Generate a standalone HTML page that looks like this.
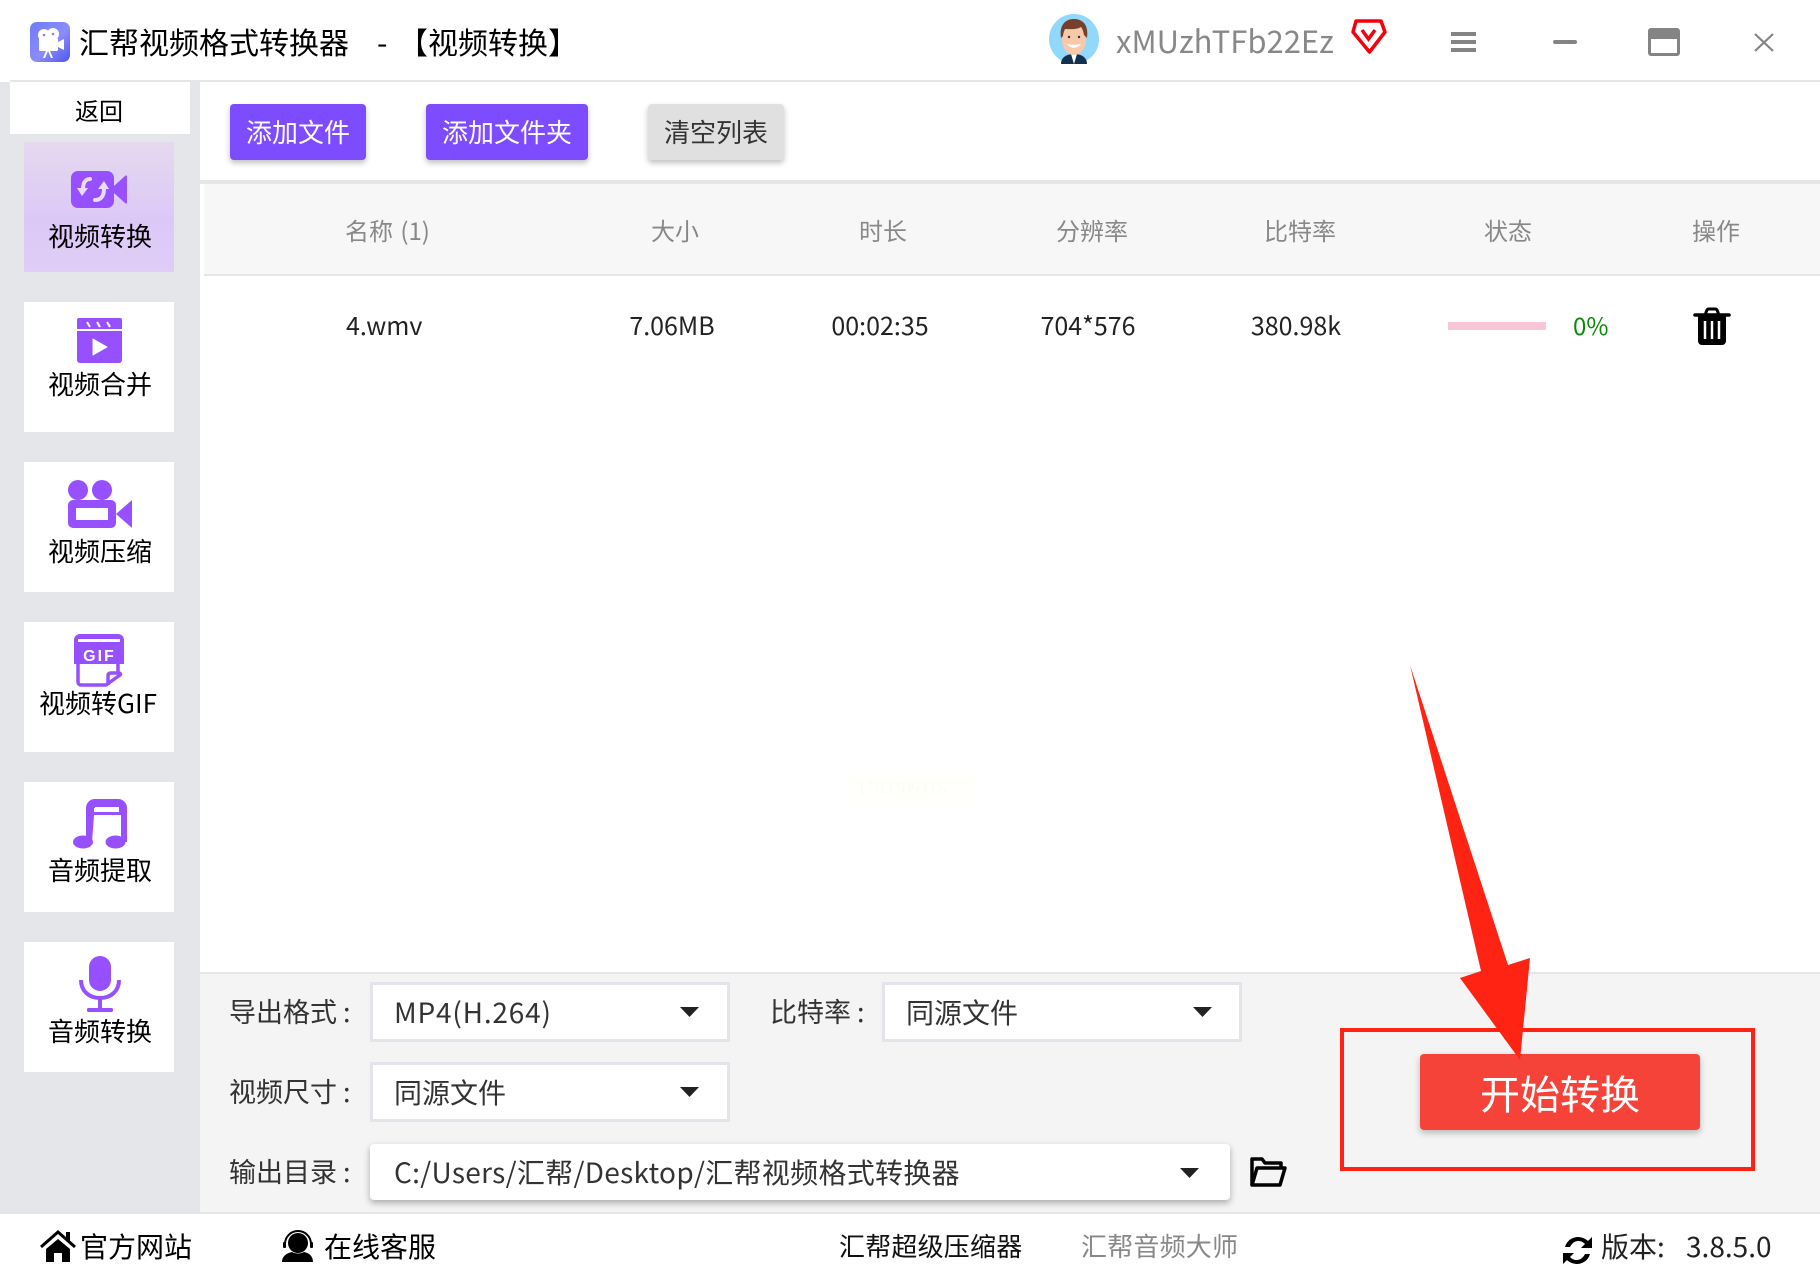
<!DOCTYPE html>
<html><head><meta charset="utf-8">
<style>
html,body{margin:0;padding:0;width:1820px;height:1280px;overflow:hidden;background:#fff;font-family:"Noto Sans CJK SC","Liberation Sans",sans-serif;color:#111}
.a{position:absolute}
.t{position:absolute;line-height:1;white-space:nowrap}
.c{transform:translateX(-50%)}
.nav{position:absolute;left:24px;width:150px;height:130px;background:#fff}
.btn{position:absolute;top:104px;height:56px;border-radius:4px;background:#7e4cff;color:#fff;font-size:26px;line-height:56px;text-align:center;box-shadow:0 3px 6px rgba(0,0,0,.25)}
.sel{position:absolute;left:370px;width:354px;height:54px;background:#fff;border:3px solid #e4e4ea}
svg{position:absolute;left:0;top:0}
</style></head><body>
<!-- backgrounds -->
<div class="a" style="left:0;top:82px;width:200px;height:1132px;background:#e4e6ea"></div>
<div class="a" style="left:10px;top:80px;width:1810px;height:2px;background:#e6e6e6"></div>
<div class="a" style="left:10px;top:82px;width:180px;height:52px;background:#fff"></div>
<div class="a" style="left:200px;top:180px;width:1620px;height:4px;background:#e6e6e6"></div>
<div class="a" style="left:204px;top:184px;width:1616px;height:90px;background:#f7f7f8"></div>
<div class="a" style="left:204px;top:274px;width:1616px;height:2px;background:#e6e6e6"></div>
<div class="a" style="left:200px;top:972px;width:1620px;height:242px;background:#f4f4f4;border-top:2px solid #e6e6e6;border-bottom:2px solid #e6e6e6;box-sizing:border-box"></div>
<div class="a" style="left:847px;top:772px;width:128px;height:33px;background:#fffffb"></div>
<div class="t" style="left:857px;top:779px;font-size:18px;color:#fcfcf6;font-family:'Liberation Serif',serif">1763709115</div>

<!-- title -->
<div class="t" style="left:79px;top:26px;font-size:30px;color:#000">汇帮视频格式转换器</div>
<div class="t" style="left:377px;top:26px;font-size:30px;color:#000">-</div>
<div class="t" style="left:398px;top:26px;font-size:30px;color:#000">【视频转换】</div>
<div class="t" style="left:1116px;top:24px;font-size:31px;color:#888">xMUzhTFb22Ez</div>

<!-- sidebar -->
<div class="t c" style="left:99px;top:98px;font-size:24px;color:#000">返回</div>
<div class="nav" style="top:142px;background:linear-gradient(#e6d9ef,#dcc8f7 60%,#dfcdf6)"></div>
<div class="nav" style="top:302px"></div>
<div class="nav" style="top:462px"></div>
<div class="nav" style="top:622px"></div>
<div class="nav" style="top:782px"></div>
<div class="nav" style="top:942px"></div>
<div class="t c" style="left:100px;top:223px;font-size:26px;color:#000">视频转换</div>
<div class="t c" style="left:100px;top:371px;font-size:26px;color:#000">视频合并</div>
<div class="t c" style="left:100px;top:538px;font-size:26px;color:#000">视频压缩</div>
<div class="t c" style="left:98px;top:690px;font-size:26px;color:#000">视频转GIF</div>
<div class="t c" style="left:100px;top:857px;font-size:26px;color:#000">音频提取</div>
<div class="t c" style="left:100px;top:1018px;font-size:26px;color:#000">音频转换</div>

<!-- toolbar -->
<div class="btn" style="left:230px;width:136px">添加文件</div>
<div class="btn" style="left:426px;width:162px">添加文件夹</div>
<div class="btn" style="left:648px;width:136px;background:#e0e0e0;color:#333">清空列表</div>

<!-- table -->
<div class="t" style="left:345px;top:218px;font-size:24px;color:#888;word-spacing:2px">名称 (1)</div>
<div class="t c" style="left:675px;top:218px;font-size:24px;color:#888">大小</div>
<div class="t c" style="left:883px;top:218px;font-size:24px;color:#888">时长</div>
<div class="t c" style="left:1092px;top:218px;font-size:24px;color:#888">分辨率</div>
<div class="t c" style="left:1300px;top:218px;font-size:24px;color:#888">比特率</div>
<div class="t c" style="left:1508px;top:218px;font-size:24px;color:#888">状态</div>
<div class="t c" style="left:1716px;top:218px;font-size:24px;color:#888">操作</div>
<div class="t" style="left:346px;top:313px;font-size:25px;color:#222">4.wmv</div>
<div class="t c" style="left:672px;top:313px;font-size:25px;color:#222">7.06MB</div>
<div class="t c" style="left:880px;top:313px;font-size:25px;color:#222">00:02:35</div>
<div class="t c" style="left:1088px;top:313px;font-size:25px;color:#222">704*576</div>
<div class="t c" style="left:1296px;top:313px;font-size:25px;color:#222">380.98k</div>
<div class="a" style="left:1448px;top:322px;width:98px;height:8px;background:#f9c6d8"></div>
<div class="t" style="left:1573px;top:313px;font-size:24px;color:#0a8a0a">0%</div>

<!-- settings -->
<div class="t" style="left:229px;top:997px;font-size:27px;color:#333">导出格式</div>
<div class="t" style="left:343px;top:997px;font-size:27px;color:#333">:</div>
<div class="t" style="left:770px;top:997px;font-size:27px;color:#333">比特率</div>
<div class="t" style="left:857px;top:997px;font-size:27px;color:#333">:</div>
<div class="t" style="left:229px;top:1077px;font-size:27px;color:#333">视频尺寸</div>
<div class="t" style="left:343px;top:1077px;font-size:27px;color:#333">:</div>
<div class="t" style="left:229px;top:1157px;font-size:27px;color:#333">输出目录</div>
<div class="t" style="left:343px;top:1157px;font-size:27px;color:#333">:</div>
<div class="sel" style="top:982px"></div>
<div class="sel" style="top:982px;left:882px"></div>
<div class="sel" style="top:1062px"></div>
<div class="a" style="left:370px;top:1144px;width:860px;height:56px;background:#fff;border-radius:4px;box-shadow:0 3px 7px rgba(0,0,0,.3)"></div>
<div class="t" style="left:394px;top:998px;font-size:28px;color:#333;letter-spacing:.8px">MP4(H.264)</div>
<div class="t" style="left:906px;top:998px;font-size:28px;color:#333">同源文件</div>
<div class="t" style="left:394px;top:1078px;font-size:28px;color:#333">同源文件</div>
<div class="t" style="left:394px;top:1158px;font-size:28px;color:#333;letter-spacing:.3px">C:/Users/汇帮/Desktop/汇帮视频格式转换器</div>

<!-- start -->
<div class="a" style="left:1420px;top:1054px;width:280px;height:76px;background:#f5433a;border-radius:4px;box-shadow:0 3px 7px rgba(0,0,0,.25);color:#fff;font-size:40px;line-height:76px;text-align:center">开始转换</div>

<!-- footer -->
<div class="t" style="left:80px;top:1232px;font-size:28px;color:#000">官方网站</div>
<div class="t" style="left:324px;top:1232px;font-size:28px;color:#000">在线客服</div>
<div class="t" style="left:839px;top:1233px;font-size:26px;color:#111;letter-spacing:.2px">汇帮超级压缩器</div>
<div class="t" style="left:1081px;top:1233px;font-size:26px;color:#888;letter-spacing:.2px">汇帮音频大师</div>
<div class="t" style="left:1601px;top:1232px;font-size:28px;color:#222">版本:</div>
<div class="t" style="left:1686px;top:1232px;font-size:28px;color:#222">3.8.5.0</div>

<svg width="1820" height="1280" viewBox="0 0 1820 1280">
<defs><linearGradient id="lg" x1="0" y1="0" x2="1" y2="1"><stop offset="0" stop-color="#6f7cf8"/><stop offset=".55" stop-color="#8c8cfb"/><stop offset="1" stop-color="#4f55ea"/></linearGradient></defs>
<!-- logo -->
<rect x="30" y="22" width="40" height="40" rx="7" fill="url(#lg)"/>
<g fill="#fff"><circle cx="44" cy="35" r="6"/><circle cx="53" cy="34" r="6"/><rect x="39" y="38" width="19" height="13" rx="1.5"/><path d="M58 42l6-3v11l-6-3z"/><path d="M46 51l-3 7h2l3-7zM50 51l3 7h-2l-3-7z"/></g>
<g fill="#8088f5"><circle cx="44" cy="35" r="1.3"/><circle cx="53" cy="34" r="1.3"/></g>

<!-- avatar -->
<ellipse cx="1074" cy="39" rx="25" ry="25" fill="#91d8fb"/>
<path d="M1061 64c0-7 6-10 13-10s13 3 13 10z" fill="#14304f"/>
<path d="M1071 54h6l-3 10z" fill="#fff"/>
<ellipse cx="1074" cy="40" rx="12" ry="15" fill="#f8c9a8"/>
<path d="M1061 38c-2-14 5-19 13-19s15 5 13 19l-3-3c-1-5-2-7-3-8-5 3-12 2-16 2-1 2-2 5-2 7z" fill="#77402a"/>
<path d="M1067 44c3 5 11 5 14 0-4 1-10 1-14 0z" fill="#fff"/>
<circle cx="1069" cy="37" r="1.2" fill="#333"/><circle cx="1079" cy="37" r="1.2" fill="#333"/>

<!-- gem -->
<path d="M1356 21h25l4 11-15.500 20L1353 32z" fill="none" stroke="#f4000e" stroke-width="3.500" stroke-linejoin="round"/>
<path d="M1362 30l6.500 9 6.500-9" fill="none" stroke="#f4000e" stroke-width="3.500"/>

<!-- window -->
<g fill="#848484">
<rect x="1451" y="32" width="25" height="4"/><rect x="1451" y="40" width="25" height="4"/><rect x="1451" y="48" width="25" height="4"/>
<rect x="1553" y="40" width="24" height="4" rx="2"/>
<path d="M1651 28h26a3 3 0 0 1 3 3v22a3 3 0 0 1-3 3h-26a3 3 0 0 1-3-3V31a3 3 0 0 1 3-3zm0 11v14h26V39z" fill-rule="evenodd"/>
</g>
<path d="M1755 34l18 17M1773 34l-18 17" stroke="#848484" stroke-width="2.200" fill="none"/>

<!-- nav icon 1 -->
<g fill="#9650ff">
<rect x="71" y="171" width="43" height="37" rx="7"/>
<path d="M114 186l11-10c1-1 2-1 2 1v25c0 2-1 2-2 1l-11-10z"/>
</g>
<path d="M90 179c-4 0-7 3-7 10" fill="none" stroke="#eadcf8" stroke-width="4" stroke-linecap="round"/>
<path d="M77 188h11l-6 8z" fill="#eadcf8"/>
<path d="M95 200c5 0 9-3 9-11" fill="none" stroke="#eadcf8" stroke-width="4" stroke-linecap="round"/>
<path d="M98 189h11l-5-8z" fill="#eadcf8"/>

<!-- nav icon 2 clapper -->
<path d="M79 318h41a2 2 0 0 1 2 2v9H77v-9a2 2 0 0 1 2-2z" fill="#9650ff"/>
<path d="M77 331h45v29a3 3 0 0 1-3 3H80a3 3 0 0 1-3-3z" fill="#9650ff"/>
<path d="M87 322l3 5M97 322l3 5M107 322l3 5" stroke="#fff" stroke-width="2"/>
<path d="M93 339l14 8-14 8z" fill="#fff" stroke="#fff" stroke-linejoin="round"/>

<!-- nav icon 3 camera -->
<g fill="#9650ff">
<circle cx="78" cy="490" r="10"/><circle cx="102" cy="490" r="10"/>
<path d="M73 500h38a5 5 0 0 1 5 5v18a5 5 0 0 1-5 5H73a5 5 0 0 1-5-5v-18a5 5 0 0 1 5-5zm3 8v12h32v-12z" fill-rule="evenodd"/>
<path d="M116 514l16-14v28z"/>
</g>

<!-- nav icon 4 GIF -->
<path d="M80 634h38a6 6 0 0 1 6 6v24H74v-24a6 6 0 0 1 6-6z" fill="#9650ff"/>
<rect x="78" y="639" width="42" height="3" fill="#fff"/>
<text x="99.500" y="661" font-family="Liberation Sans,sans-serif" font-weight="700" font-size="16" fill="#fff" text-anchor="middle" letter-spacing="2">GIF</text>
<path d="M78 664v18a3 3 0 0 0 3 3h25l14-10c1-1 0-2-1-2h-8c-2 0-3 1-3 3v9M118 664v8" fill="none" stroke="#9650ff" stroke-width="3.500" stroke-linejoin="round"/>

<!-- nav icon 5 music -->
<g fill="#9650ff">
<ellipse cx="83" cy="842" rx="10" ry="6.500"/><ellipse cx="115.500" cy="842" rx="10" ry="6.500"/>
<path d="M86 808a9 9 0 0 1 9-9h23a9 9 0 0 1 9 9v34h-6V815H94l-2 27h-6zm8 0h25v4H94z" fill-rule="evenodd"/>
</g>
<rect x="95" y="807" width="24" height="4" fill="#fff"/>

<!-- nav icon 6 mic -->
<rect x="89" y="956" width="22" height="35" rx="11" fill="#9650ff"/>
<path d="M81 980c0 11 8 18 19 18s19-7 19-18" fill="none" stroke="#9650ff" stroke-width="4"/>
<rect x="98" y="998" width="4" height="11" fill="#9650ff"/>
<rect x="87" y="1008" width="26" height="4" rx="1.500" fill="#9650ff"/>

<!-- trash -->
<path d="M1695 315h34" stroke="#000" stroke-width="3.500" stroke-linecap="round"/>
<path d="M1705 315l2-5a2 2 0 0 1 2-1h6a2 2 0 0 1 2 1l2 5" fill="none" stroke="#000" stroke-width="3"/>
<path d="M1698 316h28v25a4 4 0 0 1-4 4h-20a4 4 0 0 1-4-4z" fill="#000"/>
<path d="M1705 321v18M1712 321v18M1719 321v18" stroke="#fff" stroke-width="2.500"/>

<!-- select arrows -->
<g fill="#222">
<path d="M680 1007h19l-9.500 10zM1193 1007h19l-9.500 10zM680 1087h19l-9.500 10zM1180 1168h19l-9.500 10z"/>
</g>
<!-- folder -->
<path d="M1252 1185V1159h10l3 4h16v5" fill="none" stroke="#000" stroke-width="3.500" stroke-linejoin="round"/>
<path d="M1257 1168h28l-5 17h-28z" fill="none" stroke="#000" stroke-width="3.500" stroke-linejoin="round"/>

<!-- red annotation -->
<rect x="1342" y="1030" width="411" height="139" fill="none" stroke="#ff2313" stroke-width="4"/>
<path d="M1410 665L1508 965 1530 958 1520 1060 1460 978 1481 971z" fill="#ff2313"/>

<!-- footer icons -->
<path d="M41 1247l17-15 17 15" fill="none" stroke="#000" stroke-width="3"/>
<path d="M66 1232h4v10l-4-3z" fill="#000"/>
<path d="M46 1249l12-10 12 10v13H62v-9h-8v9h-8z" fill="#000"/>
<circle cx="298" cy="1243" r="10" fill="#000"/>
<path d="M285 1244a13 13 0 0 1 26 0" fill="none" stroke="#000" stroke-width="2"/>
<rect x="283" y="1242" width="3" height="6" rx="1" fill="#000"/><rect x="310" y="1242" width="3" height="6" rx="1" fill="#000"/>
<path d="M282 1262c0-6 5-9 10-10 3 2 9 2 12 0 5 1 9 4 9 10z" fill="#000"/>
<path d="M1565 1247c2-7 8-10 13-10 4 0 8 2 10 4l4-4v11h-11l4-4c-2-2-4-3-7-3-3 0-6 2-8 6z" fill="#000"/>
<path d="M1590 1254c-2 7-8 10-13 10-4 0-8-2-10-4l-4 4v-11h11l-4 4c2 2 4 3 7 3 3 0 6-2 8-6z" fill="#000"/>
</svg>
</body></html>
